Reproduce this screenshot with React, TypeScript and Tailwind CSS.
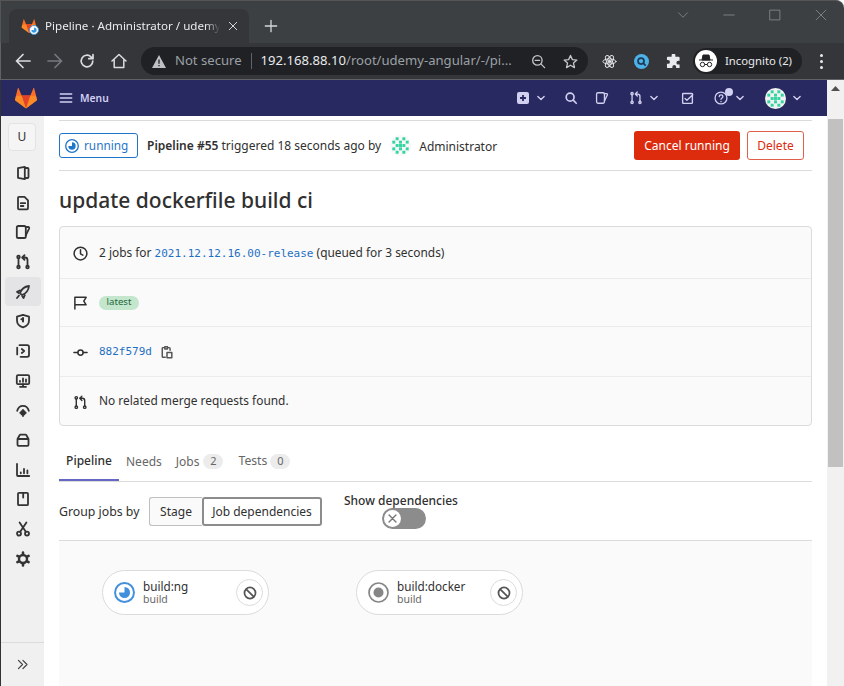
import React from "react";

const S = ({ size = 16, className = "", children, vb = "0 0 16 16", sw = 1.5 }: any) => (
  <svg width={size} height={size} viewBox={vb} fill="none" stroke="currentColor" strokeWidth={sw} strokeLinecap="round" strokeLinejoin="round" className={`shrink-0 ${className}`}>
    {children}
  </svg>
);

const Tanuki = ({ size = 24 }: { size?: number }) => (
  <svg width={size} height={size} viewBox="0 0 24 24" className="shrink-0">
    <path d="M12 22.5 1.3 14.6a.9.9 0 0 1-.3-1L3.8 2.2c.1-.4.7-.4.8 0L7.6 9.5h8.8l3-7.3c.1-.4.7-.4.8 0L23 13.6a.9.9 0 0 1-.3 1Z" fill="#fc6d26" />
    <path d="M12 22.500 7.600 9.500h8.800Z" fill="#e24329" />
    <path d="M12 22.500 1.300 14.600a.9.9 0 0 1-.3-1l1-3.600c1.800.1 3.800 0 5.600-.5Z" fill="#fca326" opacity=".55" />
    <path d="M12 22.500 22.700 14.600a.9.9 0 0 0 .3-1l-1-3.600c-1.800.1-3.800 0-5.600-.5Z" fill="#fca326" opacity=".55" />
  </svg>
);

const Identicon = ({ size = 20, bg = "#ffffff" }: { size?: number; bg?: string }) => {
  const cells = [
    [1, 0], [3, 0], [0, 1], [2, 1], [4, 1], [1, 2], [3, 2], [0, 3], [2, 3], [4, 3], [1, 4], [3, 4], [2, 2],
  ];
  return (
    <svg width={size} height={size} viewBox="0 0 20 20" className="shrink-0">
      <circle cx="10" cy="10" r="10" fill={bg} />
      {cells.map(([x, y]) => (
        <rect key={`${x}-${y}`} x={2.200 + x * 3.200} y={2.200 + y * 3.200} width="2.800" height="2.800" fill="#30d5a0" />
      ))}
    </svg>
  );
};

const Running = ({ size = 16, color = "#1f75cb" }: { size?: number; color?: string }) => (
  <svg width={size} height={size} viewBox="0 0 16 16" className="shrink-0">
    <circle cx="8" cy="8" r="7.200" fill="#fff" stroke={color} strokeWidth="1.500" />
    <path d="M8 3.800a4.200 4.200 0 1 1-4.200 4.200H8Z" fill={color} />
  </svg>
);

const CancelCircle = () => (
  <S size={14} sw={2} className="text-[#555]">
    <circle cx="8" cy="8" r="6.300" />
    <path d="M3.800 3.800 12.200 12.200" />
  </S>
);

const MRIcon = ({ size = 16 }: { size?: number }) => (
  <S size={size}>
    <circle cx="3.500" cy="13" r="1.300" />
    <circle cx="3.500" cy="3" r="1.300" />
    <circle cx="12.500" cy="13" r="1.300" />
    <path d="M3.500 4.500v7M12.500 11.500V6c0-1.500-1-2.500-2.500-2.500H7.500M9.500 1.200 7.200 3.500l2.300 2.300" />
  </S>
);

const IssueIcon = ({ size = 16 }: { size?: number }) => (
  <S size={size}>
    <rect x="1.800" y="2" width="9" height="12" rx="1.600" />
    <path d="M10.800 3h2.400c.8 0 1.200.7 1 1.300l-3.400 7" />
  </S>
);

const sideIcons = [
  <S key="project"><path d="M3 3.200 9.800 1.800v12.400L3 12.800ZM9.800 3h2.700c.6 0 1 .4 1 1v8c0 .6-.4 1-1 1H9.800" /></S>,
  <S key="repo"><path d="M3 2.800c0-.6.4-1 1-1h5.500L13 5.300v8c0 .6-.4 1-1 1H4c-.6 0-1-.4-1-1ZM5.800 8.200h4.400M5.800 11h2.600" /></S>,
  <IssueIcon key="issue" />,
  <MRIcon key="mr" />,
  <S key="rocket"><path d="M6.200 10.400 5 9c1.200-3.400 4.600-6.400 9-7-.5 4.400-3.500 7.800-7 9ZM4.800 6.500 2 7.800 3.600 9M9.800 11.200 8.500 14l-1.200-1.800" /><path d="M4 11.500 2 14" /></S>,
  <S key="shield"><path d="M8 1.800 14 3.600v4c0 3.400-2.600 5.800-6 6.800-3.400-1-6-3.400-6-6.800v-4Z" /><path d="M8 5v3.400M6.400 6.200H8" strokeWidth={2} /></S>,
  <S key="deploy"><path d="M4.500 2.200h7.800c.9 0 1.700.8 1.700 1.700v8.200c0 .9-.8 1.700-1.700 1.700H5.600M2.200 4.600v6.800" /><path d="M6.800 6 9.200 8 6.800 10" /></S>,
  <S key="monitor"><rect x="1.800" y="2.200" width="12.400" height="9" rx="1.200" /><path d="M5 13.800h6M8 11.200v2.600M5 7.800v1M8 5.500v3.300M11 6.500v2.300" /></S>,
  <S key="infra"><path d="M2.200 8.800C3 5.600 5.300 3.800 8 3.800s5 1.800 5.800 5" /><circle cx="8" cy="10.800" r="1.900" fill="currentColor" /><path d="M8 7.800v.8M8 13v1M5.200 10.800h.8M10 10.800h.8" /></S>,
  <S key="package"><path d="M2.500 7 4.600 3.200c.2-.3.5-.5.9-.5h5c.4 0 .7.2.9.5L13.500 7v5.800c0 .6-.4 1-1 1h-9c-.6 0-1-.4-1-1ZM2.500 7h11" /></S>,
  <S key="chart"><path d="M2 2v11c0 .6.4 1 1 1h11.200M5.800 10.500v.8M9 7v4.300M12.400 8.500v2.800" /></S>,
  <S key="wiki"><rect x="3" y="1.800" width="10" height="12.400" rx="1" /><path d="M8.200 2v4.500" /></S>,
  <S key="snippet"><circle cx="4" cy="12.600" r="2" /><circle cx="12" cy="12.600" r="2" /><path d="M5.200 10.800 11.400 1.500M10.800 10.800 4.600 1.500" /></S>,
  <S key="gear"><circle cx="8" cy="8" r="4" strokeWidth={2.400} /><path d="M8 1.500v1.200M8 13.300v1.200M2.400 4.800l1 .6M12.600 10.600l1 .6M2.400 11.200l1-.6M12.600 5.400l1-.6" strokeWidth={2.600} /></S>,
];

const TopTab = () => (
  <div className="relative flex h-[34px] w-[240px] items-center rounded-t-[8px] bg-[#35363a] pl-[12px]">
    <div className="relative h-[16px] w-[16px]">
      <Tanuki size={16} />
      <span className="absolute -bottom-[1px] -right-[2px]"><Running size={10} color="#3b9bdc" /></span>
    </div>
    <span className="ml-[8px] w-[175px] whitespace-nowrap text-[11.600px] leading-[16px] text-[#e8eaed] [mask-image:linear-gradient(to_right,black_92%,transparent)]">Pipeline · Administrator / udemy-</span>
    <S size={10} sw={1.600} className="ml-[8px] text-[#d5d7da]"><path d="M2 2 14 14M14 2 2 14" /></S>
  </div>
);

const Row = ({ icon, children, h }: any) => (
  <div className={`flex items-center border-b border-[#ececec] pl-[13px] last:border-b-0 ${h}`}>
    <span className="flex w-[26px] text-[#303030]">{icon}</span>
    {children}
  </div>
);

const Job = ({ name, icon }: { name: string; icon: React.ReactNode }) => (
  <div className="flex h-[45px] w-[167px] items-center rounded-[24px] border border-[#dbdbdb] bg-white pl-[11px] pr-[5px]">
    {icon}
    <div className="ml-[8px] flex-1 pb-[1px]">
      <div className="text-[11.700px] leading-[14px] text-[#303030]">{name}</div>
      <div className="text-[10.500px] leading-[13px] text-[#666]">build</div>
    </div>
    <div className="flex h-[27px] w-[27px] items-center justify-center rounded-full border border-[#dbdbdb] bg-white"><CancelCircle /></div>
  </div>
);

const Chevron = ({ cls = "" }: { cls?: string }) => (
  <S size={10} sw={2.200} className={cls}><path d="M3 5.500 8 10.500 13 5.500" /></S>
);

export default function App() {
  return (
    <div className="flex h-[686px] w-[844px] flex-col overflow-hidden bg-white font-['Noto_Sans','Open_Sans',sans-serif] text-[#303030]">
      {/* Tab strip */}
      <div className="flex h-[43px] items-end rounded-tr-[8px] border-t border-l border-[#555] bg-[#3c4043] pl-[8px]">
        <TopTab />
        <S size={14} sw={1.500} className="mb-[10px] ml-[15px] text-[#d5d7da]"><path d="M8 1.500v13M1.500 8h13" /></S>
        <div className="mb-[22px] ml-auto flex items-center gap-[34px] pr-[17px] text-[#8f9396]">
          <S size={12} sw={1}><path d="M2 5 8 11 14 5" /></S>
          <S size={12} sw={1}><path d="M1 8h14" /></S>
          <S size={12} sw={1}><rect x="1.500" y="1.500" width="13" height="13" /></S>
          <S size={12} sw={1}><path d="M1.500 1.500 14.500 14.500M14.500 1.500 1.500 14.500" /></S>
        </div>
      </div>
      {/* Toolbar */}
      <div className="flex h-[37px] items-center border-b border-[#5f6368] border-l bg-[#35363a] pl-[14px] pr-[21px]">
        <div className="flex items-center gap-[16px] text-[#dadce0]">
          <S size={16} sw={1.700}><path d="M15 8H1.500M8 1.500 1.500 8 8 14.500" /></S>
          <S size={16} sw={1.700} className="text-[#75797d]"><path d="M1 8h13.500M8 1.500 14.500 8 8 14.500" /></S>
          <S size={16} sw={1.700}><path d="M13.800 8A5.800 5.800 0 1 1 12 3.800L14 5.600M14 1.500v4.200H9.800" /></S>
          <S size={16} sw={1.500}><path d="M1 8 8 1.500 15 8M3.200 7v7.500h9.600V7" /></S>
        </div>
        <div className="ml-[14px] flex h-[28px] w-[447px] items-center rounded-full bg-[#202124] pl-[11px] pr-[10px] text-[13.100px]">
          <svg width="14" height="13" viewBox="0 0 14 13" className="shrink-0"><path d="M7 0 14 13H0Z" fill="#bdc1c6" /><path d="M7 4.500v4.200M7 10v1.200" stroke="#202124" strokeWidth="1.300" /></svg>
          <span className="ml-[9px] text-[#9aa0a6]">Not secure</span>
          <span className="ml-[9px] mr-[9px] h-[16px] w-px bg-[#5f6368]" />
          <span className="whitespace-nowrap text-[#e8eaed]">192.168.88.10<span className="text-[#9aa0a6]">/root/udemy-angular/-/pi...</span></span>
          <S size={15} sw={1.400} className="ml-auto text-[#c4c7ca]"><circle cx="6.800" cy="6.800" r="5" /><path d="M4.500 6.800h4.600M10.500 10.500 14.500 14.500" /></S>
          <S size={15} sw={1.400} className="ml-[17px] text-[#c4c7ca]"><path d="M8 1.500 10 6l4.800.5-3.600 3.200 1 4.800L8 12l-4.200 2.500 1-4.800L1.200 6.500 6 6Z" /></S>
        </div>
        <div className="ml-[14px] flex items-center gap-[17px] text-[#e8eaed]">
          <S size={15} sw={1}><circle cx="8" cy="8" r="1.400" fill="currentColor" /><ellipse cx="8" cy="8" rx="7" ry="2.800" /><ellipse cx="8" cy="8" rx="7" ry="2.800" transform="rotate(60 8 8)" /><ellipse cx="8" cy="8" rx="7" ry="2.800" transform="rotate(120 8 8)" /></S>
          <svg width="15" height="15" viewBox="0 0 16 16" className="shrink-0"><circle cx="8" cy="8" r="8" fill="#4db2e8" /><circle cx="7.500" cy="7.500" r="3.200" fill="none" stroke="#1d3a55" strokeWidth="1.800" /><path d="M10 10l2.500 2.500" stroke="#1d3a55" strokeWidth="1.800" /></svg>
          <svg width="15" height="15" viewBox="0 0 16 16" className="shrink-0"><path d="M6 1.500a2 2 0 0 1 4 0V3h3.500c.6 0 1 .4 1 1v3.200h-1.400a2 2 0 0 0 0 4h1.400V15H10.800v-1.400a2 2 0 0 0-4 0V15H2c-.6 0-1-.4-1-1v-3.500h1.200a2 2 0 0 0 0-4H1V4c0-.6.4-1 1-1h4Z" fill="#e8eaed" /></svg>
        </div>
        <div className="ml-[12px] flex h-[26px] w-[109px] items-center rounded-full bg-[#202124] pl-[2px]">
          <div className="flex h-[22px] w-[22px] items-center justify-center rounded-full bg-white">
            <svg width="16" height="14" viewBox="0 0 16 14"><path d="M1 6h14M4 6l1-5h6l1 5Z" fill="#202124" stroke="#202124" /><circle cx="4.500" cy="10.500" r="2.200" fill="none" stroke="#202124" /><circle cx="11.500" cy="10.500" r="2.200" fill="none" stroke="#202124" /><path d="M6.700 10.500h2.600" stroke="#202124" /></svg>
          </div>
          <span className="ml-[8px] whitespace-nowrap text-[11.300px] text-[#e8eaed]">Incognito (2)</span>
        </div>
        <div className="ml-auto flex flex-col gap-[3px]">
          <span className="h-[3px] w-[3px] rounded-full bg-[#e8eaed]" />
          <span className="h-[3px] w-[3px] rounded-full bg-[#e8eaed]" />
          <span className="h-[3px] w-[3px] rounded-full bg-[#e8eaed]" />
        </div>
      </div>
      {/* Page */}
      <div className="flex min-h-0 flex-1 border-l border-[#333]">
        <div className="flex min-w-0 flex-1 flex-col">
          {/* Navbar */}
          <div className="flex h-[36px] shrink-0 items-center bg-[#292961] pl-[13px] text-[#d1d0f0]">
            <Tanuki size={24} />
            <S size={14} sw={1.700} className="ml-[21px]"><path d="M1.500 3.500h13M1.500 8h13M1.500 12.500h13" /></S>
            <span className="ml-[7px] pt-[1px] text-[10.300px] font-semibold">Menu</span>
            <div className="ml-auto flex items-center pr-[25px]">
              <svg width="12" height="12" viewBox="0 0 12 12" className="shrink-0"><rect width="12" height="12" rx="2" fill="currentColor" /><path d="M6 3v6M3 6h6" stroke="#292961" strokeWidth="1.800" /></svg>
              <Chevron cls="ml-[7px]" />
              <S size={14} sw={1.900} className="ml-[18px]"><circle cx="7" cy="7" r="4.500" /><path d="M10.500 10.500 14 14" /></S>
              <span className="ml-[17px]"><IssueIcon size={14} /></span>
              <span className="ml-[20px] flex"><MRIcon size={14} /></span>
              <Chevron cls="ml-[6px]" />
              <S size={13} sw={1.700} className="ml-[22px]"><path d="M2 2.500c0-.4.300-.7.700-.7h10.600c.4 0 .7.300.7.700v10.800c0 .4-.3.700-.7.700H2.700a.7.700 0 0 1-.7-.7ZM5 8l2.300 2.300L14.500 3.500" /></S>
              <span className="relative ml-[20px] flex">
                <S size={14} sw={1.500}><circle cx="8" cy="8" r="6.800" /><path d="M6 6.300c0-2.600 4.200-2.600 4.200 0 0 1.600-2.200 1.600-2.200 3.200M8 11.800v.4" /></S>
                <span className="absolute -right-[5px] -top-[3px] h-[8px] w-[8px] rounded-full bg-[#d1d0f0]" />
              </span>
              <Chevron cls="ml-[7px]" />
              <span className="ml-[20px] flex"><Identicon size={21} bg="#f2f2f2" /></span>
              <Chevron cls="ml-[6px]" />
            </div>
          </div>
          <div className="flex min-h-0 flex-1">
            {/* Sidebar */}
            <aside className="flex w-[43px] shrink-0 flex-col bg-[#f0f0f0]">
              <div className="ml-[7px] mt-[7px] flex h-[28px] w-[28px] items-center justify-center rounded-[4px] border border-[#e3e3e3] bg-[#f5f5f5] text-[12px] text-[#303030]">U</div>
              <div className="mt-[7px] flex flex-col items-center">
                {sideIcons.map((ic, i) => (
                  <div key={i} className={`flex h-[29.700px] w-[36px] items-center justify-center text-[#333] [&_svg]:stroke-[1.800] ${i === 4 ? "rounded-[4px] bg-[#e4e4e7]" : ""}`}>{ic}</div>
                ))}
              </div>
              <div className="mt-auto flex h-[44px] items-center justify-center border-t border-[#dbdbdb] text-[#444]">
                <S size={13} sw={1.500}><path d="M3 3 8 8 3 13M8.500 3l5 5-5 5" /></S>
              </div>
            </aside>
            {/* Main */}
            <main className="min-w-0 flex-1 overflow-hidden px-[15px]">
              <div className="mt-[4px] flex h-[51px] items-center border-y border-[#dbdbdb] pr-[8px]">
                <div className="flex h-[25px] w-[79px] items-center rounded-[3px] border border-[#1f75cb] pl-[5px] text-[11.800px] text-[#1f75cb]">
                  <Running size={14} />
                  <span className="ml-[5px]">running</span>
                </div>
                <span className="ml-[9px] text-[12px]"><b className="font-semibold">Pipeline #55</b> triggered 18 seconds ago by</span>
                <span className="ml-[9px] flex items-center"><Identicon size={21} bg="#f8f8f8" /></span>
                <span className="ml-[8px] mt-[3px] text-[12px]">Administrator</span>
                <button className="ml-auto h-[29px] w-[106px] rounded-[3px] bg-[#dd2b0e] text-[12px] text-white">Cancel running</button>
                <button className="ml-[7px] h-[29px] w-[57px] rounded-[3px] border border-[#e0604a] bg-white text-[12px] text-[#dd2b0e]">Delete</button>
              </div>
              <h1 className="mt-[14px] text-[21px] font-medium leading-[30px] text-[#303030]">update dockerfile build ci</h1>
              <div className="mt-[11px] rounded-[4px] border border-[#dbdbdb] bg-[#fafafa] text-[11.900px]">
                <Row h="h-[52px] pt-[1px]" icon={<S size={15} sw={1.600}><circle cx="8" cy="8" r="6.800" /><path d="M8 4v4.300l2.500 1.500" /></S>}>
                  <span>2 jobs for <span className="font-['DejaVu_Sans_Mono',monospace] text-[11px] text-[#1f6fc4]">2021.12.12.16.00-release</span> (queued for 3 seconds)</span>
                </Row>
                <Row h="h-[48px]" icon={<S size={15} sw={1.600}><path d="M2 15V2.500h12L11.500 6.500 14 10.500H2" /></S>}>
                  <span className="flex h-[14px] w-[40px] items-center justify-center rounded-full bg-[#c3e6cd] text-[9.600px] text-[#24663b]">latest</span>
                </Row>
                <Row h="h-[50px] pt-[1px]" icon={<S size={15} sw={1.600}><circle cx="8" cy="8" r="2.800" /><path d="M1 8h4M11 8h4" /></S>}>
                  <span className="font-['DejaVu_Sans_Mono',monospace] text-[11px] text-[#1f6fc4]">882f579d</span>
                  <S size={14} sw={1.700} className="ml-[8px] text-[#555]"><path d="M5 3H3.500c-.5 0-.9.400-.9.900v9.200c0 .5.400.900.900.900H6M11.500 6V3.900c0-.5-.4-.9-.9-.9H9M5.500 2h3v2.500h-3Z" /><rect x="8" y="8.500" width="5.500" height="6" /></S>
                </Row>
                <Row h="h-[48px]" icon={<span className="mt-[2px] flex"><MRIcon size={15} /></span>}>
                  <span>No related merge requests found.</span>
                </Row>
              </div>
              {/* Tabs */}
              <div className="mt-[14px] flex h-[42px] items-center border-b border-[#dbdbdb] text-[12px] text-[#666]">
                <span className="flex h-full w-[60px] items-center justify-center border-b-2 border-[#6666c4] pt-[2px] font-medium text-[#303030]">Pipeline</span>
                <span className="ml-[7px] pt-[2px]">Needs</span>
                <span className="ml-[14px] pt-[2px]">Jobs</span>
                <span className="ml-[4px] mt-[2px] flex h-[15px] w-[20px] items-center justify-center rounded-full bg-[#ececec] text-[11px]">2</span>
                <span className="ml-[15px] pt-[2px] text-[12.200px]">Tests</span>
                <span className="ml-[3px] mt-[2px] flex h-[15px] w-[20px] items-center justify-center rounded-full bg-[#ececec] text-[11px]">0</span>
              </div>
              {/* Controls */}
              <div className="flex h-[59px] items-start border-b border-[#dbdbdb] text-[12px]">
                <span className="mt-[21px] w-[90px] whitespace-nowrap text-[12.300px]">Group jobs by</span>
                <div className="mt-[15px] flex h-[29px] items-stretch">
                  <span className="flex w-[53px] items-center justify-center rounded-l-[3px] border border-r-0 border-[#bfbfbf] bg-[#fafafa]">Stage</span>
                  <span className="flex w-[120px] items-center justify-center rounded-[3px] border-2 border-[#8c8c8c] bg-white">Job dependencies</span>
                </div>
                <div className="ml-[22px] mt-[11px] flex flex-col items-center">
                  <span className="text-[12px] font-medium leading-[16px]">Show dependencies</span>
                  <div className="-mt-[1px] ml-[6px] flex h-[21px] w-[44px] items-center rounded-full bg-[#8c8c8c] pl-[2px]">
                    <span className="flex h-[17px] w-[17px] items-center justify-center rounded-full bg-white">
                      <S size={11} sw={2} className="text-[#777]"><path d="M3 3 13 13M13 3 3 13" /></S>
                    </span>
                  </div>
                </div>
              </div>
              {/* Graph */}
              <div className="flex h-[200px] items-start gap-[87px] bg-[#fafafa] pl-[43px] pt-[29px]">
                <Job name="build:ng" icon={<Running size={21} color="#428fdc" />} />
                <Job name="build:docker" icon={
                  <svg width="21" height="21" viewBox="0 0 21 21" className="shrink-0"><circle cx="10.500" cy="10.500" r="9.500" fill="#fff" stroke="#868686" strokeWidth="1.700" /><circle cx="10.500" cy="10.500" r="5" fill="#868686" /></svg>
                } />
              </div>
            </main>
          </div>
        </div>
        {/* Scrollbar */}
        <div className="flex w-[17px] shrink-0 flex-col items-center bg-[#f1f1f1]">
          <svg width="9" height="6" viewBox="0 0 9 6" className="mt-[6px] shrink-0"><path d="M4.500 0 9 5H0Z" fill="#505050" /></svg>
          <div className="mt-[27px] h-[348px] w-[15px] bg-[#c1c1c1]" />
        </div>
      </div>
    </div>
  );
}
